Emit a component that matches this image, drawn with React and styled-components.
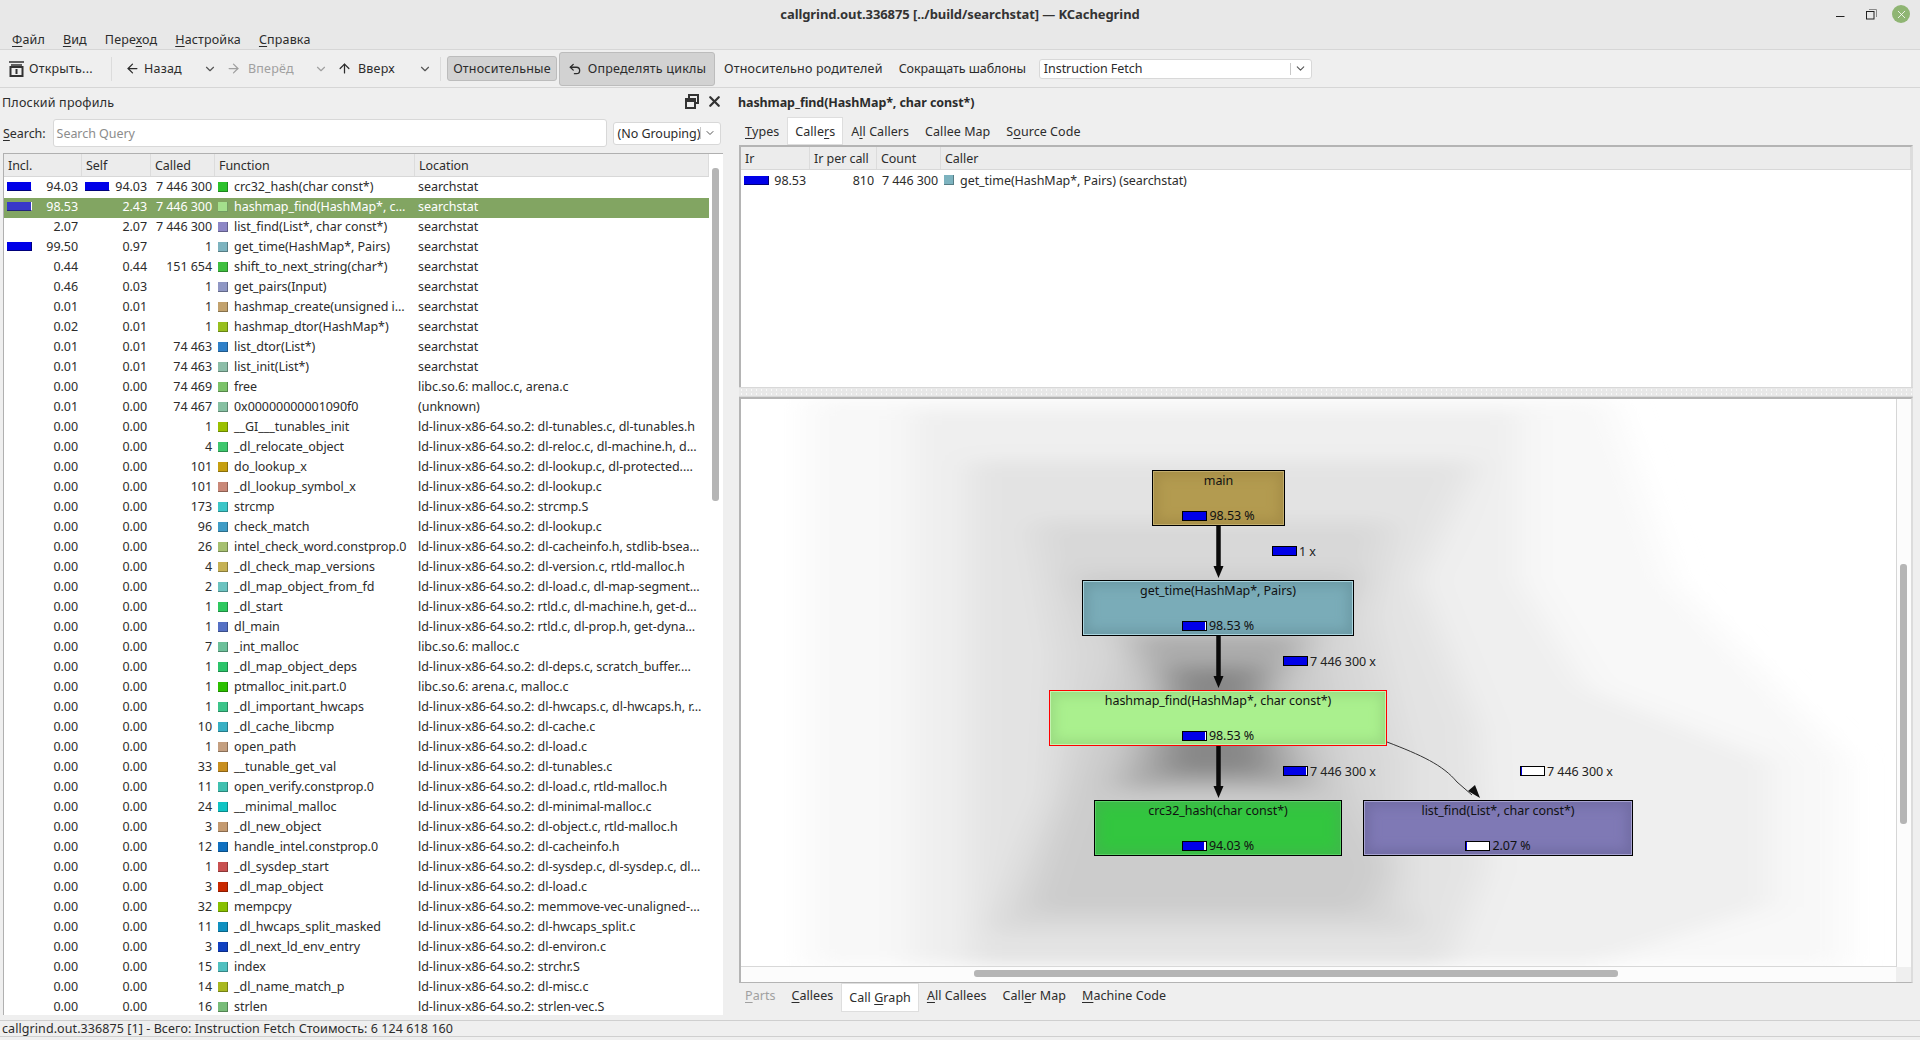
import React from "react";
import styled, { createGlobalStyle } from "styled-components";
import { ArrowLeft, ArrowRight, ArrowUp, ChevronDown, Undo2, X } from "lucide-react";

const rows = [
  [94.03, 94.03, "7 446 300", "#2bc12b", "crc32_hash(char const*)", "searchstat", true, true],
  [98.53, 2.43, "7 446 300", "#a4e08c", "hashmap_find(HashMap*, c…", "searchstat", true, false],
  [2.07, 2.07, "7 446 300", "#8d87c6", "list_find(List*, char const*)", "searchstat"],
  [99.5, 0.97, "1", "#7db3bf", "get_time(HashMap*, Pairs)", "searchstat", true, false],
  [0.44, 0.44, "151 654", "#3fbf3f", "shift_to_next_string(char*)", "searchstat"],
  [0.46, 0.03, "1", "#8f97c4", "get_pairs(Input)", "searchstat"],
  [0.01, 0.01, "1", "#c2a26d", "hashmap_create(unsigned i…", "searchstat"],
  [0.02, 0.01, "1", "#97bf1e", "hashmap_dtor(HashMap*)", "searchstat"],
  [0.01, 0.01, "74 463", "#2f80c8", "list_dtor(List*)", "searchstat"],
  [0.01, 0.01, "74 463", "#8cbda8", "list_init(List*)", "searchstat"],
  [0, 0, "74 469", "#7cc26a", "free", "libc.so.6: malloc.c, arena.c"],
  [0.01, 0, "74 467", "#86c0a2", "0x00000000001090f0", "(unknown)"],
  [0, 0, "1", "#9ac000", "__GI___tunables_init", "ld-linux-x86-64.so.2: dl-tunables.c, dl-tunables.h"],
  [0, 0, "4", "#3ec76d", "_dl_relocate_object", "ld-linux-x86-64.so.2: dl-reloc.c, dl-machine.h, d…"],
  [0, 0, "101", "#c69f10", "do_lookup_x", "ld-linux-x86-64.so.2: dl-lookup.c, dl-protected.…"],
  [0, 0, "101", "#c98878", "_dl_lookup_symbol_x", "ld-linux-x86-64.so.2: dl-lookup.c"],
  [0, 0, "173", "#3cc6c8", "strcmp", "ld-linux-x86-64.so.2: strcmp.S"],
  [0, 0, "96", "#3f9cc6", "check_match", "ld-linux-x86-64.so.2: dl-lookup.c"],
  [0, 0, "26", "#a6c070", "intel_check_word.constprop.0", "ld-linux-x86-64.so.2: dl-cacheinfo.h, stdlib-bsea…"],
  [0, 0, "4", "#c6b255", "_dl_check_map_versions", "ld-linux-x86-64.so.2: dl-version.c, rtld-malloc.h"],
  [0, 0, "2", "#6cc3c0", "_dl_map_object_from_fd", "ld-linux-x86-64.so.2: dl-load.c, dl-map-segment…"],
  [0, 0, "1", "#2ec85f", "_dl_start", "ld-linux-x86-64.so.2: rtld.c, dl-machine.h, get-d…"],
  [0, 0, "1", "#5570c4", "dl_main", "ld-linux-x86-64.so.2: rtld.c, dl-prop.h, get-dyna…"],
  [0, 0, "7", "#6cc09a", "_int_malloc", "libc.so.6: malloc.c"],
  [0, 0, "1", "#2cc46a", "_dl_map_object_deps", "ld-linux-x86-64.so.2: dl-deps.c, scratch_buffer.…"],
  [0, 0, "1", "#2cc000", "ptmalloc_init.part.0", "libc.so.6: arena.c, malloc.c"],
  [0, 0, "1", "#3cc48a", "_dl_important_hwcaps", "ld-linux-x86-64.so.2: dl-hwcaps.c, dl-hwcaps.h, r…"],
  [0, 0, "10", "#38b0c4", "_dl_cache_libcmp", "ld-linux-x86-64.so.2: dl-cache.c"],
  [0, 0, "1", "#c49f80", "open_path", "ld-linux-x86-64.so.2: dl-load.c"],
  [0, 0, "33", "#c88f20", "__tunable_get_val", "ld-linux-x86-64.so.2: dl-tunables.c"],
  [0, 0, "11", "#40c0b0", "open_verify.constprop.0", "ld-linux-x86-64.so.2: dl-load.c, rtld-malloc.h"],
  [0, 0, "24", "#10c4c4", "__minimal_malloc", "ld-linux-x86-64.so.2: dl-minimal-malloc.c"],
  [0, 0, "3", "#c49a70", "_dl_new_object", "ld-linux-x86-64.so.2: dl-object.c, rtld-malloc.h"],
  [0, 0, "12", "#1070c0", "handle_intel.constprop.0", "ld-linux-x86-64.so.2: dl-cacheinfo.h"],
  [0, 0, "1", "#c85050", "_dl_sysdep_start", "ld-linux-x86-64.so.2: dl-sysdep.c, dl-sysdep.c, dl…"],
  [0, 0, "3", "#c82800", "_dl_map_object", "ld-linux-x86-64.so.2: dl-load.c"],
  [0, 0, "32", "#88c000", "mempcpy", "ld-linux-x86-64.so.2: memmove-vec-unaligned-…"],
  [0, 0, "11", "#1090c0", "_dl_hwcaps_split_masked", "ld-linux-x86-64.so.2: dl-hwcaps_split.c"],
  [0, 0, "3", "#1040c0", "_dl_next_ld_env_entry", "ld-linux-x86-64.so.2: dl-environ.c"],
  [0, 0, "15", "#50c0c0", "index", "ld-linux-x86-64.so.2: strchr.S"],
  [0, 0, "14", "#a8b820", "_dl_name_match_p", "ld-linux-x86-64.so.2: dl-misc.c"],
  [0, 0, "16", "#78bc78", "strlen", "ld-linux-x86-64.so.2: strlen-vec.S"],
];

const nodes = [
  { name: "main", pct: "98.53", fill: 98, x: 411, y: 71, w: 133, bg: "#b39b50", edge: "#a58d47", line: "#000", hi: "#c2ad6c" },
  { name: "get_time(HashMap*, Pairs)", pct: "98.53", fill: 98, x: 341, y: 181, w: 272, bg: "#7aacb8", edge: "#6c9aa5", line: "#000", hi: "#a9d4de" },
  { name: "hashmap_find(HashMap*, char const*)", pct: "98.53", fill: 98, x: 308, y: 291, w: 338, bg: "#aaf08e", edge: "#9bdc82", line: "#f00", hi: "#c4f4b0" },
  { name: "crc32_hash(char const*)", pct: "94.03", fill: 94, x: 353, y: 401, w: 248, bg: "#33c63f", edge: "#3eb94a", line: "#000", hi: "#58d064" },
  { name: "list_find(List*, char const*)", pct: "2.07", fill: 3, x: 622, y: 401, w: 270, bg: "#7f79b5", edge: "#716ca3", line: "#000", hi: "#a6a2d0" },
];

const edgeLabels = [
  { text: "1 x", fill: 98, x: 531, y: 144 },
  { text: "7 446 300 x", fill: 98, x: 542, y: 254 },
  { text: "7 446 300 x", fill: 94, x: 542, y: 364 },
  { text: "7 446 300 x", fill: 3, x: 779, y: 364 },
];

// background falloff of the call graph, darkest last
const shadows = [
  { c: "#f8f8f8", pts: "90,0 1180,0 1260,500 1500,1000 1500,1568 90,1568" },
  { c: "#efefef", pts: "230,30 1060,30 1060,500 1150,800 1400,1000 1400,1400 1150,1568 230,1568" },
  { c: "#e3e3e3", pts: "310,170 1000,170 920,500 1000,900 1010,1300 960,1568 310,1568" },
  { c: "#d8d8d8", pts: "400,340 880,340 850,600 900,1000 900,1400 920,1470 340,1470 420,1100 430,700" },
  { c: "#cccccc", pts: "450,480 840,480 790,680 830,1100 880,1300 850,1420 390,1420 440,1100 510,700" },
  { c: "#acacac", pts: "530,650 770,650 730,800 780,1080 510,1080 560,800" },
  { c: "#888888", pts: "580,740 710,740 700,810 720,1040 570,1040 590,810" },
];

const GlobalStyle = createGlobalStyle`
  html, body {
    margin: 0;
    padding: 0;
    background: #efefef;
  }
  * {
    box-sizing: border-box;
  }
`;

const Window = styled.div`
  width: 1920px;
  height: 1040px;
  display: flex;
  flex-direction: column;
  overflow: hidden;
  background: #efefef;
  color: #2c2c2c;
  font-family: "Noto Sans", "Open Sans", sans-serif;
  font-size: 12.5px;
  letter-spacing: -0.05px;
  white-space: nowrap;
`;

const TitleBar = styled.div`
  height: 28px;
  display: grid;
  grid-template-columns: 1fr auto 1fr;
  align-items: center;
  background: #e8e8e8;
`;

const Title = styled.div`
  grid-column: 2;
  font-weight: 700;
  font-size: 13px;
  letter-spacing: -0.08px;
  color: #333;
`;

const WindowButtons = styled.div`
  display: flex;
  justify-content: flex-end;
  align-items: center;
  padding-right: 10px;
  gap: 15px;
  & > svg:first-child {
    margin-right: 6px;
  }
`;

const CloseCircle = styled.div`
  width: 18px;
  height: 18px;
  border-radius: 50%;
  background: #8fb573;
  color: #fff;
  display: flex;
  align-items: center;
  justify-content: center;
`;

const MenuBar = styled.div`
  height: 22px;
  display: flex;
  align-items: center;
  gap: 18px;
  padding: 2px 0 0 12px;
  background: #e8e8e8;
  border-bottom: 1px solid #d6d6d6;
  letter-spacing: 0.15px;
`;

const Mn = styled.span`
  text-decoration: underline;
  text-underline-offset: 2px;
`;

const Toolbar = styled.div`
  height: 38px;
  display: flex;
  align-items: center;
  padding-left: 8px;
  border-bottom: 1px solid #d6d6d6;
  letter-spacing: 0.2px;
`;

const ToolItem = styled.div`
  display: flex;
  align-items: center;
  gap: ${(p) => p.$gap || 6}px;
  width: ${(p) => p.$w}px;
  color: ${(p) => (p.$off ? "#a0a0a0" : "inherit")};
`;

const ToolSep = styled.div`
  width: 1px;
  height: 24px;
  background: #dcdcdc;
  margin: ${(p) => p.$m};
`;

const ToggleButton = styled.div`
  display: flex;
  align-items: center;
  justify-content: center;
  gap: 6px;
  width: ${(p) => p.$w}px;
  height: ${(p) => p.$h}px;
  margin-right: 2px;
  background: #d2d2d2;
  border: 1px solid #bcbcbc;
  border-radius: 3px;
`;

const ToolText = styled.div`
  margin-left: ${(p) => p.$ml}px;
  letter-spacing: ${(p) => p.$ls || 0.2}px;
`;

const Combo = styled.div`
  display: flex;
  align-items: center;
  justify-content: space-between;
  width: ${(p) => p.$w}px;
  height: ${(p) => p.$h}px;
  margin-left: ${(p) => p.$ml || 0}px;
  padding: 0 4px;
  background: #fff;
  border: 1px solid #d8d8d8;
  border-radius: 3px;
  letter-spacing: -0.05px;
`;

const ComboArrow = styled.div`
  display: flex;
  align-items: center;
  padding-left: 3px;
  border-left: 1px solid #c8c8c8;
  height: 12px;
  color: #555;
`;

const Main = styled.div`
  height: 932px;
  display: flex;
`;

const LeftDock = styled.div`
  width: 735px;
  padding: 0 0 0 3px;
  display: flex;
  flex-direction: column;
`;

const DockHead = styled.div`
  height: 31px;
  display: flex;
  align-items: center;
  justify-content: space-between;
  padding: 0 12px 2px 0;
  margin-left: -1px;
  letter-spacing: 0.2px;
`;

const DockIcons = styled.div`
  display: flex;
  align-items: center;
  gap: 7px;
  margin-top: -3px;
`;

const SearchRow = styled.div`
  height: 28px;
  display: flex;
  align-items: center;
`;

const SearchInput = styled.div`
  width: 554px;
  height: 28px;
  margin-left: 7px;
  padding: 0 3px;
  display: flex;
  align-items: center;
  background: #fff;
  border: 1px solid #d8d8d8;
  border-radius: 3px;
  color: #8c8c8c;
`;

const TableBox = styled.div`
  width: 720px;
  height: 862px;
  margin-top: 6px;
  display: flex;
  background: #fff;
  border-top: 1px solid #b0b0b0;
  border-left: 1px solid #b0b0b0;
  overflow: hidden;
`;

const TableBody = styled.div`
  width: 705px;
  flex: none;
`;

const HeadRow = styled.div`
  height: 23px;
  display: grid;
  grid-template-columns: ${(p) => p.$cols};
  background: #ececec;
  border-bottom: 1px solid #d8d8d8;
`;

const HeadCell = styled.div`
  display: flex;
  align-items: center;
  padding-left: 4px;
  border-right: 1px solid #dcdcdc;
`;

const Row = styled.div`
  height: 20px;
  padding-bottom: 3px;
  display: grid;
  grid-template-columns: 78px 69px 64px 200px 294px;
  align-items: center;
  background: ${(p) => (p.$sel ? "#82a562" : "transparent")};
  color: ${(p) => (p.$sel ? "#fff" : "inherit")};
  margin-top: ${(p) => (p.$first ? 1 : 0)}px;
`;

const NumCell = styled.div`
  display: flex;
  align-items: center;
  justify-content: space-between;
  padding: 0 4px 0 3px;
`;

const Spacer = styled.span``;

const CalledCell = styled.div`
  text-align: right;
  padding-right: 3px;
`;

const FuncCell = styled.div`
  display: flex;
  align-items: center;
  gap: 6px;
  padding-left: 3px;
  overflow: hidden;
`;

const TextCell = styled.div`
  padding-left: 3px;
  overflow: hidden;
`;

const Swatch = styled.div`
  flex: none;
  width: 10px;
  height: 10px;
  background: ${(p) => p.$c};
  border-right: 1px solid rgba(0, 0, 0, 0.3);
  border-bottom: 1px solid rgba(0, 0, 0, 0.3);
`;

const TableBar = styled.div`
  width: 25px;
  height: 9px;
  background: ${(p) => (p.$sel ? "#3838c8" : "#0000e8")};
  border-bottom: 1px solid ${(p) => (p.$sel ? "#22227a" : "#00007a")};
  border-right: 1px solid ${(p) => (p.$notch ? "#fff" : "#00007a")};
`;

const VTrack = styled.div`
  flex: 1;
  padding: ${(p) => p.$top}px 3px 0;
  background: ${(p) => p.$bg || "#fff"};
  border-left: ${(p) => (p.$line ? "1px solid #d6d6d6" : "none")};
`;

const VThumb = styled.div`
  width: 7px;
  height: ${(p) => p.$h}px;
  background: #b5b5b5;
  border-radius: 3px;
`;

const RightPane = styled.div`
  flex: 1;
  padding: 0 7px 0 2px;
  display: flex;
  flex-direction: column;
`;

const PaneTitle = styled.div`
  height: 29px;
  display: flex;
  align-items: center;
  padding-left: 1px;
  font-weight: 700;
  letter-spacing: -0.1px;
`;

const TabBar = styled.div`
  height: ${(p) => p.$h}px;
  display: flex;
  align-items: ${(p) => p.$align};
  flex: none;
  letter-spacing: 0.05px;
`;

const Tab = styled.div`
  height: ${(p) => p.$h}px;
  display: flex;
  align-items: center;
  padding: 0 7px ${(p) => p.$pb || 0}px;
  background: ${(p) => (p.$on ? "#fff" : "transparent")};
  border: 1px solid ${(p) => (p.$on ? "#dedede" : "transparent")};
  color: ${(p) => (p.$off ? "#a0a0a0" : "inherit")};
`;

const UpperPanel = styled.div`
  height: 242px;
  margin-left: 2px;
  background: #fff;
  border-top: 2px solid #b4b4b4;
  border-left: 2px solid #b4b4b4;
  border-right: 2px solid #dcdcdc;
`;

const CallerRow = styled.div`
  height: 20px;
  display: grid;
  grid-template-columns: 69px 67px 64px 1fr;
  align-items: center;
`;

const Splitter = styled.div`
  height: 10px;
  flex: none;
  margin: 0 0 0 2px;
  border-top: 1px solid #d8d8d8;
  border-bottom: 1px solid #d8d8d8;
  background-color: #e8e8e8;
  background-image: radial-gradient(#f8f8f8 1px, transparent 1px);
  background-size: 5px 4px;
`;

const GraphFrame = styled.div`
  height: 586px;
  margin-left: 2px;
  display: grid;
  grid-template-columns: 1fr 15px;
  grid-template-rows: 1fr 15px;
  background: #fff;
  border-top: 2px solid #b4b4b4;
  border-left: 2px solid #b4b4b4;
  border-right: 2px solid #dcdcdc;
  border-bottom: 1px solid #b4b4b4;
`;

const Canvas = styled.div`
  position: relative;
  overflow: hidden;
  background: #fff;
  border-bottom: 1px solid #d8d8d8;
`;

const CanvasDrawing = styled.svg`
  position: absolute;
  left: 0;
  top: 0;
  width: 100%;
  height: 100%;
`;

const HTrack = styled.div`
  padding: 3px 0 0 233px;
  background: #fcfcfc;
`;

const HThumb = styled.div`
  width: 644px;
  height: 7px;
  background: #b5b5b5;
  border-radius: 3px;
`;

const Corner = styled.div`
  background: #efefef;
`;

const Node = styled.div`
  position: absolute;
  left: ${(p) => p.$x}px;
  top: ${(p) => p.$y}px;
  width: ${(p) => p.$w}px;
  height: 56px;
  display: flex;
  flex-direction: column;
  align-items: center;
  justify-content: space-between;
  padding: 1px 0 1px;
  color: #111;
  border: 1px solid ${(p) => p.$line};
  background: ${(p) => p.$bg};
  box-shadow: inset 0 0 0 1px ${(p) => p.$hi}, inset 0 0 12px 5px ${(p) => p.$edge};
`;

const Percent = styled.div`
  display: flex;
  align-items: center;
  gap: 2px;
`;

const GraphBar = styled.div`
  width: 25px;
  height: 10px;
  background: #fff;
  border: 1px solid #000;
`;

const GraphBarFill = styled.div`
  height: 100%;
  background: #0000e8;
`;

const EdgeLabel = styled.div`
  position: absolute;
  left: ${(p) => p.$x}px;
  top: ${(p) => p.$y}px;
  height: 16px;
  display: flex;
  align-items: center;
  gap: 2px;
  color: #222;
`;

const StatusBar = styled.div`
  height: 17px;
  display: flex;
  align-items: center;
  padding-left: 2px;
  border-top: 1px solid #cfcfcf;
  border-bottom: 1px solid #cfcfcf;
  flex: none;
  letter-spacing: 0.08px;
`;

function OpenIcon() {
  return (
    <svg width="17" height="17" viewBox="0 0 17 17" fill="none" stroke="#333" strokeWidth="2">
      <path d="M1 2h15M3 5h11" strokeWidth="1.5" />
      <rect x="2.5" y="7" width="12" height="9" />
      <path d="M8.5 9v5" />
    </svg>
  );
}

function FloatIcon() {
  return (
    <svg width="14" height="15" viewBox="0 0 14 15" fill="none" stroke="#333" strokeWidth="2">
      <path d="M4 5V1h9v8h-3" />
      <rect x="1" y="5" width="9" height="9" />
      <path d="M1 7h9" />
    </svg>
  );
}

function MaximizeIcon() {
  return (
    <svg width="11" height="11" viewBox="0 0 11 11" fill="none">
      <path d="M3 .5h7.5V8" stroke="#8a8a8a" />
      <rect x=".5" y="2.5" width="7.5" height="7.5" stroke="#222" />
    </svg>
  );
}

function MinimizeIcon() {
  return (
    <svg width="9" height="11" viewBox="0 0 9 11">
      <path d="M0 7.5h8.5" stroke="#222" />
    </svg>
  );
}

function Edges() {
  const shafts = [127, 237, 347];
  return (
    <CanvasDrawing>
      {shafts.map((y) => (
        <g key={y}>
          <path d={`M477.5 ${y}V${y + 42}`} stroke="#0a0a0a" strokeWidth="4.5" />
          <path d={`M472.5 ${y + 40}h10l-5 12z`} fill="#0a0a0a" />
        </g>
      ))}
      <path d="M646 343C680 356 702 366 716 383L731 396" stroke="#333" fill="none" />
      <path d="M739 399L727 392L734 386z" fill="#111" />
    </CanvasDrawing>
  );
}

function Shadows() {
  return (
    <CanvasDrawing viewBox="0 0 1568 1568" preserveAspectRatio="none">
      <defs>
        <filter id="soft" x="-20%" y="-20%" width="140%" height="140%">
          <feGaussianBlur stdDeviation="24" />
        </filter>
      </defs>
      <g filter="url(#soft)">
        {shadows.map((s) => (
          <polygon key={s.pts} points={s.pts} fill={s.c} />
        ))}
      </g>
    </CanvasDrawing>
  );
}

const fmt = (n) => n.toFixed(2);

export default function App() {
  return (
    <Window>
      <GlobalStyle />
      <TitleBar>
        <Title>callgrind.out.336875 [../build/searchstat] — KCachegrind</Title>
        <WindowButtons>
          <MinimizeIcon />
          <MaximizeIcon />
          <CloseCircle>
            <X size={13} strokeWidth={1.5} />
          </CloseCircle>
        </WindowButtons>
      </TitleBar>
      <MenuBar>
        <span><Mn>Ф</Mn>айл</span>
        <span><Mn>В</Mn>ид</span>
        <span>Пере<Mn>х</Mn>од</span>
        <span><Mn>Н</Mn>астройка</span>
        <span><Mn>С</Mn>правка</span>
      </MenuBar>
      <Toolbar>
        <ToolItem $w={103} $gap={4}><OpenIcon />Открыть...</ToolItem>
        <ToolSep $m="0 13px 0 0" />
        <ToolItem $w={78} $gap={4}><ArrowLeft size={15} strokeWidth={2} />Назад</ToolItem>
        <ToolItem $w={23}><ChevronDown size={14} color="#555" /></ToolItem>
        <ToolItem $w={88} $gap={7} $off><ArrowRight size={15} strokeWidth={2} />Вперёд</ToolItem>
        <ToolItem $w={23} $off><ChevronDown size={14} /></ToolItem>
        <ToolItem $w={81} $gap={6}><ArrowUp size={15} strokeWidth={2} />Вверх</ToolItem>
        <ToolItem $w={22}><ChevronDown size={14} color="#555" /></ToolItem>
        <ToolSep $m="0 6px 0 0" />
        <ToggleButton $w={110} $h={25}>Относительные</ToggleButton>
        <ToggleButton $w={156} $h={34}><Undo2 size={14} strokeWidth={2.2} />Определять циклы</ToggleButton>
        <ToolText $ml={7}>Относительно родителей</ToolText>
        <ToolText $ml={16} $ls={-0.05}>Сокращать шаблоны</ToolText>
        <Combo $w={273} $h={20} $ml={13}>
          Instruction Fetch
          <ComboArrow><ChevronDown size={13} /></ComboArrow>
        </Combo>
      </Toolbar>
      <Main>
        <LeftDock>
          <DockHead>
            Плоский профиль
            <DockIcons>
              <FloatIcon />
              <X size={17} strokeWidth={3.2} color="#333" />
            </DockIcons>
          </DockHead>
          <SearchRow>
            <span><Mn>S</Mn>earch:</span>
            <SearchInput>Search Query</SearchInput>
            <Combo $w={108} $h={23} $ml={6}>
              (No Grouping)
              <ComboArrow><ChevronDown size={12} /></ComboArrow>
            </Combo>
          </SearchRow>
          <TableBox>
            <TableBody>
              <HeadRow $cols="78px 69px 64px 200px 294px">
                <HeadCell>Incl.</HeadCell>
                <HeadCell>Self</HeadCell>
                <HeadCell>Called</HeadCell>
                <HeadCell>Function</HeadCell>
                <HeadCell>Location</HeadCell>
              </HeadRow>
              {rows.map((r, i) => (
                <Row key={r[4]} $sel={i === 1} $first={i === 0}>
                  <NumCell>
                    {r[6] ? <TableBar $sel={i === 1} $notch={i < 2} /> : <Spacer />}
                    {fmt(r[0])}
                  </NumCell>
                  <NumCell>
                    {r[7] ? <TableBar $notch /> : <Spacer />}
                    {fmt(r[1])}
                  </NumCell>
                  <CalledCell>{r[2]}</CalledCell>
                  <FuncCell>
                    <Swatch $c={r[3]} />
                    {r[4]}
                  </FuncCell>
                  <TextCell>{r[5]}</TextCell>
                </Row>
              ))}
            </TableBody>
            <VTrack $top={14}>
              <VThumb $h={333} />
            </VTrack>
          </TableBox>
        </LeftDock>
        <RightPane>
          <PaneTitle>hashmap_find(HashMap*, char const*)</PaneTitle>
          <TabBar $h={28} $align="flex-end">
            <Tab $h={26} $pb={2}><Mn>T</Mn>ypes</Tab>
            <Tab $h={28} $on>Calle<Mn>r</Mn>s</Tab>
            <Tab $h={26} $pb={2}>A<Mn>l</Mn>l Callers</Tab>
            <Tab $h={26} $pb={2}>Callee Map</Tab>
            <Tab $h={26} $pb={2}>S<Mn>o</Mn>urce Code</Tab>
          </TabBar>
          <UpperPanel>
            <HeadRow $cols="69px 67px 64px 1fr">
              <HeadCell>Ir</HeadCell>
              <HeadCell>Ir per call</HeadCell>
              <HeadCell>Count</HeadCell>
              <HeadCell>Caller</HeadCell>
            </HeadRow>
            <CallerRow>
              <NumCell>
                <TableBar />
                98.53
              </NumCell>
              <CalledCell>810</CalledCell>
              <CalledCell>7 446 300</CalledCell>
              <FuncCell>
                <Swatch $c="#7db3bf" />
                get_time(HashMap*, Pairs) (searchstat)
              </FuncCell>
            </CallerRow>
          </UpperPanel>
          <Splitter />
          <GraphFrame>
            <Canvas>
              <Shadows />
              <Edges />
              {nodes.map((n) => (
                <Node key={n.name} $x={n.x} $y={n.y} $w={n.w} $bg={n.bg} $edge={n.edge} $line={n.line} $hi={n.hi}>
                  <div>{n.name}</div>
                  <Percent>
                    <GraphBar>
                      <GraphBarFill style={{ width: `${n.fill}%` }} />
                    </GraphBar>
                    {n.pct} %
                  </Percent>
                </Node>
              ))}
              {edgeLabels.map((l) => (
                <EdgeLabel key={`${l.x}-${l.y}`} $x={l.x} $y={l.y}>
                  <GraphBar>
                    <GraphBarFill style={{ width: `${l.fill}%` }} />
                  </GraphBar>
                  {l.text}
                </EdgeLabel>
              ))}
            </Canvas>
            <VTrack $top={165} $bg="#fcfcfc" $line>
              <VThumb $h={260} />
            </VTrack>
            <HTrack>
              <HThumb />
            </HTrack>
            <Corner />
          </GraphFrame>
          <TabBar $h={29} $align="flex-start">
            <Tab $h={25} $off><Mn>P</Mn>arts</Tab>
            <Tab $h={25}><Mn>C</Mn>allees</Tab>
            <Tab $h={29} $on><span>Call <Mn>G</Mn>raph</span></Tab>
            <Tab $h={25}><Mn>A</Mn>ll Callees</Tab>
            <Tab $h={25}>Call<Mn>e</Mn>r Map</Tab>
            <Tab $h={25}><Mn>M</Mn>achine Code</Tab>
          </TabBar>
        </RightPane>
      </Main>
      <StatusBar>callgrind.out.336875 [1] - Всего: Instruction Fetch Стоимость: 6 124 618 160</StatusBar>
    </Window>
  );
}
